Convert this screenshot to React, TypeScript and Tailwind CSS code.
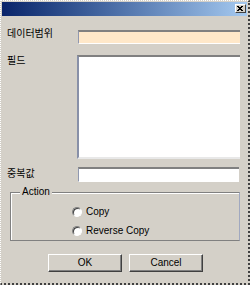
import React from "react";

const font = { fontFamily: '"Liberation Sans", "Noto Sans CJK KR", sans-serif' };

function Radio({ label }: { label: string }) {
  return (
    <div className="flex items-center gap-[4px] h-[19px]">
      <span className="w-[10px] h-[10px] rounded-full bg-white border border-[#808080] border-b-white border-r-white shadow-[inset_1px_1px_0_#404040]" />
      <span className="text-[10px] text-black leading-none">{label}</span>
    </div>
  );
}

function Button({ label }: { label: string }) {
  return (
    <button className="w-[74px] h-[18px] bg-[#d4d0c8] border border-white border-r-[#404040] border-b-[#404040] shadow-[inset_-1px_-1px_0_#808080] text-[10px] text-black leading-none">
      {label}
    </button>
  );
}

export default function App() {
  return (
    <div
      style={font}
      className="w-[250px] h-[285px] bg-[#d4d0c8] border-l border-t border-white border-r-2 border-b-2 border-r-[#404040] border-b-[#404040] border-dotted p-px flex flex-col"
    >
      {/* title bar */}
      <div className="h-[14px] shrink-0 bg-gradient-to-r from-[#0a246a] to-[#a6caf0] flex justify-end items-start pt-[2px] pr-px">
        <button className="w-[11px] h-[9px] bg-[#d4d0c8] border-t border-l border-white border-r border-b border-r-[#404040] border-b-[#404040] flex items-center justify-center">
          <svg width="7" height="5" viewBox="0 0 7 5">
            <path d="M1 0 L6 5 M6 0 L1 5 M0 0 L5 5 M5 0 L0 5" stroke="#000" strokeWidth="1" />
          </svg>
        </button>
      </div>

      <div className="flex flex-col pl-[5px] pr-[6px]">
        {/* 데이터범위 */}
        <div className="flex items-start mt-[14px] h-[14px]">
          <span className="w-[71px] text-[10px] leading-[10px] mt-[-1px]">데이터범위</span>
          <div className="w-[162px] h-[14px] bg-[#ffe8c9] border-t-2 border-t-[#808080] border-l border-l-[#9098b0] border-b border-b-white" />
        </div>

        {/* 필드 */}
        <div className="flex items-start mt-[11px] h-[104px]">
          <span className="w-[70px] text-[10px] leading-[10px] mt-px">필드</span>
          <div className="w-[163px] h-[104px] bg-white border-t-2 border-t-[#808080] border-l-2 border-l-[#8890a8] border-b-2 border-b-[#e8e8e8]" />
        </div>

        {/* 중복값 */}
        <div className="flex items-center mt-[8px] h-[15px]">
          <span className="w-[71px] text-[10px] leading-[10px] mt-[-2px]">중복값</span>
          <div className="w-[161px] h-[15px] bg-white border-t-2 border-t-[#808080] border-l border-l-[#9098b0] border-b border-b-white" />
        </div>

        {/* Action group */}
        <div className="relative mt-[10px] ml-[3px] w-[230px] h-[49px] shrink-0 border border-[#808080] border-r-[#a0a8c0] shadow-[inset_1px_1px_0_#fff]">
          <span className="absolute left-[9px] top-[-7px] px-[2px] bg-[#d4d0c8] text-[10px] leading-[12px]">Action</span>
          <div className="flex flex-col pl-[61px] pt-[9px]">
            <Radio label="Copy" />
            <Radio label="Reverse Copy" />
          </div>
        </div>

        {/* buttons */}
        <div className="flex gap-[7px] mt-[13px] ml-[41px]">
          <Button label="OK" />
          <Button label="Cancel" />
        </div>
      </div>
    </div>
  );
}
